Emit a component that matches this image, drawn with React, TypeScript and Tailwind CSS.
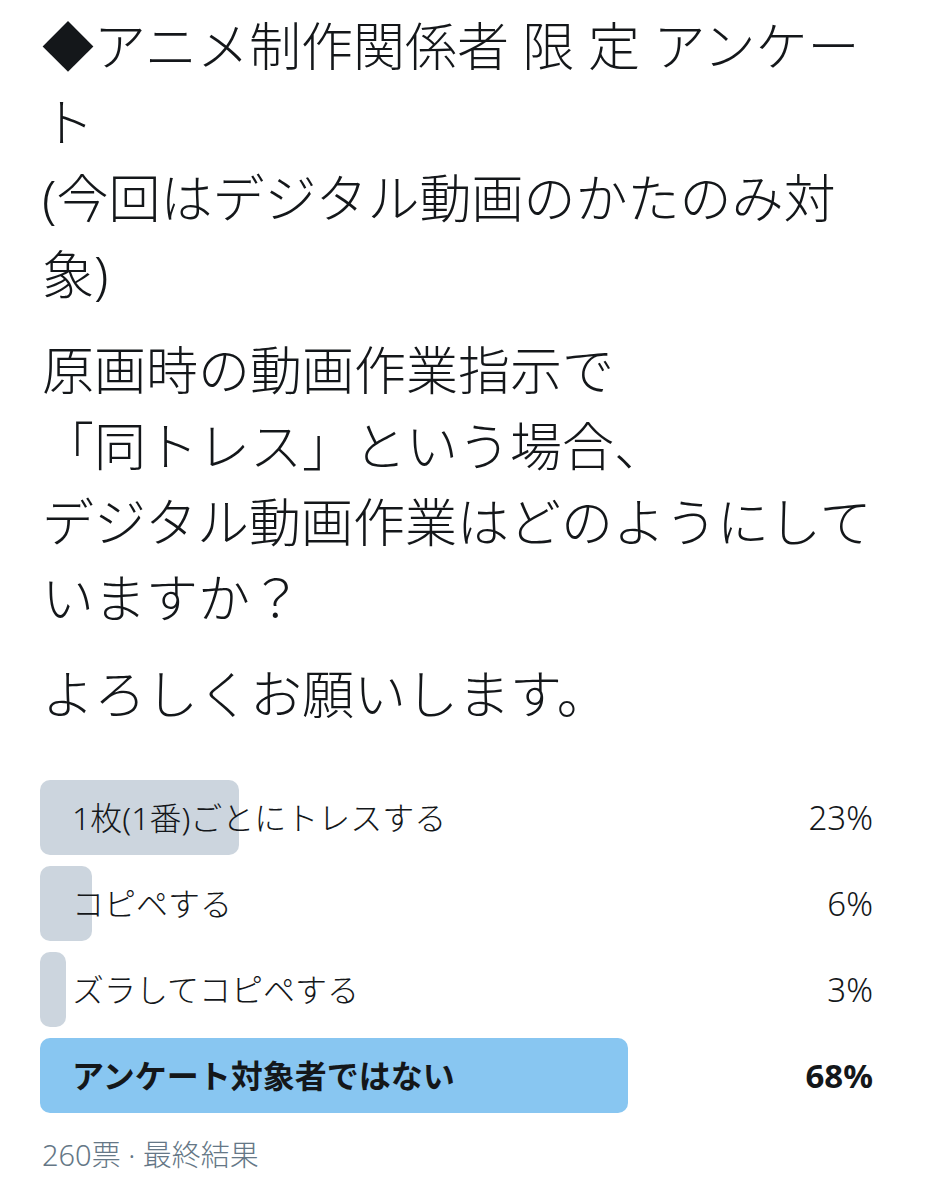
import React from 'react';

interface PollOption {
  label: string;
  percent: number;
  winner?: boolean;
}

const options: PollOption[] = [
  { label: '1枚(1番)ごとにトレスする', percent: 23 },
  { label: 'コピペする', percent: 6 },
  { label: 'ズラしてコピペする', percent: 3 },
  { label: 'アンケート対象者ではない', percent: 68, winner: true },
];

const PollRow: React.FC<{ option: PollOption }> = ({ option }) => (
  <div className="relative h-[75px]">
    <div
      className={`absolute inset-y-0 left-0 rounded-[10px] ${option.winner ? 'bg-[#88c6f1]' : 'bg-[#ccd5de]'}`}
      style={{ width: `${option.percent}%` }}
    />
    <div
      className={`relative flex h-full items-center justify-between pl-8 pr-8 text-[32px] ${option.winner ? 'font-bold' : 'font-light'}`}
    >
      <span>{option.label}</span>
      <span className="text-[33px]">{option.percent}%</span>
    </div>
  </div>
);

export default function App() {
  return (
    <div className="w-[945px] h-[1200px] bg-white px-10 pt-2 text-[#14171a] font-['Noto_Sans','Noto_Sans_CJK_JP',sans-serif]">
      {/* Tweet body */}
      <p className="pl-0.5 text-[52px] leading-[76px] font-light">
        ◆アニメ制作関係者 限 定 アンケー
        <br />
        ト
        <br />
        (今回はデジタル動画のかたのみ対
        <br />
        象)
      </p>
      <p className="mt-5 pl-0.5 text-[52px] leading-[76px] font-light">
        原画時の動画作業指示で
        <br />
        「同トレス」という場合、
        <br />
        デジタル動画作業はどのようにして
        <br />
        いますか？
      </p>
      <p className="mt-5 pl-0.5 text-[52px] leading-[76px] font-light">よろしくお願いします。</p>

      {/* Poll */}
      <div className="mt-12 flex flex-col gap-[11px]">
        {options.map((o) => (
          <PollRow key={o.label} option={o} />
        ))}
      </div>

      <div className="mt-[22px] pl-0.5 text-[29px] leading-[40px] font-light text-[#657786]">
        260票 · 最終結果
      </div>
    </div>
  );
}
